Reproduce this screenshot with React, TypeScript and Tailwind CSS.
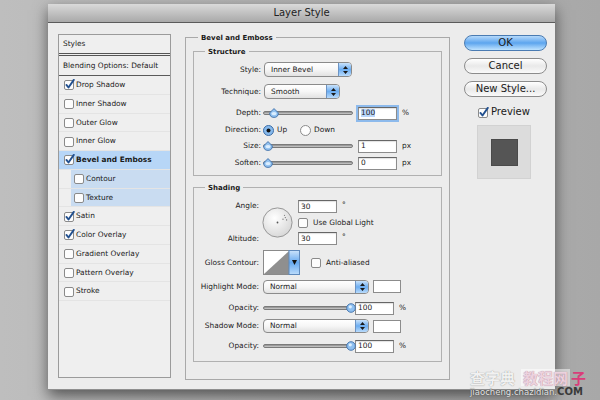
import React from "react";

type StyleRow = { label: string; checked?: boolean; active?: boolean; sub?: boolean };

const styleRows: StyleRow[] = [
  { label: "Drop Shadow", checked: true },
  { label: "Inner Shadow" },
  { label: "Outer Glow" },
  { label: "Inner Glow" },
  { label: "Bevel and Emboss", checked: true, active: true },
  { label: "Contour", sub: true },
  { label: "Texture", sub: true },
  { label: "Satin", checked: true },
  { label: "Color Overlay", checked: true },
  { label: "Gradient Overlay" },
  { label: "Pattern Overlay" },
  { label: "Stroke" },
];

const CheckBox = ({ checked }: { checked?: boolean }) => (
  <svg width="11" height="11" viewBox="0 0 11 11" className="shrink-0 overflow-visible">
    <rect x="0.5" y="1.5" width="9" height="9" rx="1.5" fill="#fdfdfd" stroke="#8a8a8a" />
    {checked && (
      <path
        d="M2.4 5.9 L4.5 8.5 L9.8 0.9"
        fill="none"
        stroke="#22508f"
        strokeWidth="1.9"
        strokeLinecap="round"
        strokeLinejoin="round"
      />
    )}
  </svg>
);

const Radio = ({ on }: { on?: boolean }) => (
  <svg width="11" height="11" viewBox="0 0 11 11" className="shrink-0">
    <circle cx="5.5" cy="5.5" r="5" fill={on ? "#86b9ec" : "#fdfdfd"} stroke={on ? "#3d6da6" : "#8a8a8a"} />
    {on && <circle cx="5.5" cy="5.5" r="2" fill="#111" />}
  </svg>
);

const Select = ({ value, className }: { value: string; className: string }) => (
  <div
    className={`flex rounded-[4px] border border-[#8b8b8b] bg-gradient-to-b from-white via-[#f6f6f6] to-[#e2e2e2] overflow-hidden ${className}`}
  >
    <span className="flex-1 pl-[6px] flex items-center">{value}</span>
    <span className="w-[13px] flex items-center justify-center border-l border-[#6c93c3] bg-gradient-to-b from-[#c9e2fa] via-[#6badf1] to-[#b9dbfb]">
      <svg width="5" height="8" viewBox="0 0 5 8">
        <path d="M2.5 0 L5 3 H0 Z M0 5 H5 L2.5 8 Z" fill="#1a1a1a" />
      </svg>
    </span>
  </div>
);

const Field = ({ value, focus }: { value: string; focus?: boolean }) => (
  <div
    className={`w-[39px] h-[13px] bg-white border border-[#8c8c8c] border-t-[#666] pl-[2px] flex items-center shadow-[inset_0_1px_1px_rgba(0,0,0,0.12)] ${
      focus ? "ring-2 ring-[#8dbaec]" : ""
    }`}
  >
    {focus ? <span className="bg-[#bad7fb]">{value}</span> : value}
  </div>
);

const Slider = ({ pos, round }: { pos: number; round?: boolean }) => (
  <div className="relative w-[90px] h-[12px] flex items-center shrink-0">
    <div className="w-full h-[4px] rounded-full border border-[#7a7a7a] bg-gradient-to-b from-[#8a8a8a] to-[#cfcfcf]" />
    {round ? (
      <svg className="absolute top-[1px]" style={{ left: pos }} width="10" height="10" viewBox="0 0 10 10">
        <circle cx="5" cy="5" r="4.3" fill="#8fc0f0" stroke="#3f71aa" strokeWidth="0.9" />
        <circle cx="4.3" cy="3.8" r="1.6" fill="#dcefff" />
      </svg>
    ) : (
      <svg className="absolute top-[1px]" style={{ left: pos }} width="10" height="10" viewBox="0 0 10 10">
        <path d="M5 0.6 L9.3 4.8 Q9.4 9.4 5 9.4 Q0.6 9.4 0.7 4.8 Z" fill="#92c2f0" stroke="#3f71aa" strokeWidth="0.9" />
        <ellipse cx="5" cy="5.6" rx="2.6" ry="1.6" fill="#dbeeff" />
      </svg>
    )}
  </div>
);

const Legend = ({ text, className }: { text: string; className: string }) => (
  <div className={`-mt-[5px] h-[10px] w-fit px-[3px] bg-[#ececec] font-bold text-[7px] leading-[10px] ${className}`}>
    {text}
  </div>
);

const Button = ({ label, primary }: { label: string; primary?: boolean }) => (
  <div
    className={`h-[16px] rounded-full border text-[10px] leading-[14px] text-center ${
      primary
        ? "border-[#4a7bb2] bg-gradient-to-b from-[#b5d9fa] via-[#5ca5ee] to-[#bfe3fe]"
        : "border-[#8c8c8c] bg-gradient-to-b from-white via-[#e9e9e9] to-[#fafafa]"
    }`}
  >
    {label}
  </div>
);

const AngleDial = () => (
  <svg width="31" height="31" viewBox="0 0 31 31" className="shrink-0">
    <defs>
      <radialGradient id="dial" cx="0.4" cy="0.35" r="0.7">
        <stop offset="0" stopColor="#ffffff" />
        <stop offset="1" stopColor="#d6d6d6" />
      </radialGradient>
    </defs>
    <circle cx="15.5" cy="15.5" r="14.6" fill="url(#dial)" stroke="#979797" />
    <circle cx="15.5" cy="15.5" r="0.9" fill="#555" />
    <circle cx="21" cy="12.2" r="0.6" fill="#666" />
    <circle cx="23.3" cy="10.6" r="0.6" fill="#666" />
    <circle cx="24.6" cy="12.9" r="0.6" fill="#666" />
    <circle cx="22.5" cy="8.4" r="0.6" fill="#888" />
  </svg>
);

const ContourPreview = () => (
  <svg width="37" height="25" viewBox="0 0 37 25" className="shrink-0">
    <defs>
      <linearGradient id="cblue" x1="0" y1="0" x2="0" y2="1">
        <stop offset="0" stopColor="#cbe3fb" />
        <stop offset="0.5" stopColor="#66a9f0" />
        <stop offset="1" stopColor="#bcdcfb" />
      </linearGradient>
    </defs>
    <rect x="0.5" y="0.5" width="36" height="24" fill="#fff" stroke="#8a8a8a" />
    <path d="M1 24 L26 1 V24 Z" fill="#8f8f8f" />
    <rect x="26" y="0.5" width="10.5" height="24" fill="url(#cblue)" stroke="#5f89bb" />
    <path d="M29 10 H34 L31.5 15 Z" fill="#111" />
  </svg>
);

const LeftPanel = () => (
  <div className="w-[113px] h-[344px] border border-[#9b9b9b] bg-[#efefef] shrink-0">
    <div className="h-[21px] border-b-[3px] border-double border-[#555] pl-[4px] flex items-center">Styles</div>
    <div className="h-[20px] border-b border-[#5a5a5a] pl-[4px] flex items-center">Blending Options: Default</div>
    {styleRows.map((s) => (
      <div
        key={s.label}
        className={`h-[18.75px] flex border-b border-[#e4e4e4] ${s.active ? "bg-[#b7d6f7] font-bold" : ""}`}
      >
        <div
          className={`flex items-center gap-[1px] h-full ${
            s.sub ? "ml-[12px] pl-[3px] flex-1 bg-[#c9dcf1]" : "pl-[5px]"
          }`}
        >
          <CheckBox checked={s.checked} />
          <span>{s.label}</span>
        </div>
      </div>
    ))}
  </div>
);

const Structure = () => (
  <div className="mt-[8px] h-[125px] border border-[#b1b1b1] flex flex-col">
    <Legend text="Structure" className="ml-[11px]" />
    <div className="mt-[5px] h-[15px] flex items-center">
      <span className="w-[67px] text-right">Style:</span>
      <Select value="Inner Bevel" className="ml-[3px] w-[88px] h-[15px]" />
    </div>
    <div className="mt-[7px] h-[15px] flex items-center">
      <span className="w-[67px] text-right">Technique:</span>
      <Select value="Smooth" className="ml-[3px] w-[76px] h-[15px]" />
    </div>
    <div className="mt-[7px] h-[14px] flex items-center">
      <span className="w-[67px] text-right">Depth:</span>
      <div className="ml-[2px]">
        <Slider pos={6} />
      </div>
      <div className="ml-[5px]">
        <Field value="100" focus />
      </div>
      <span className="ml-[5px]">%</span>
    </div>
    <div className="mt-[4px] h-[12px] flex items-center">
      <span className="w-[67px] text-right">Direction:</span>
      <span className="ml-[2px]">
        <Radio on />
      </span>
      <span className="ml-[3px]">Up</span>
      <span className="ml-[13px]">
        <Radio />
      </span>
      <span className="ml-[3px]">Down</span>
    </div>
    <div className="mt-[4px] h-[12px] flex items-center">
      <span className="w-[67px] text-right">Size:</span>
      <div className="ml-[2px]">
        <Slider pos={0} />
      </div>
      <div className="ml-[5px]">
        <Field value="1" />
      </div>
      <span className="ml-[5px]">px</span>
    </div>
    <div className="mt-[5px] h-[12px] flex items-center">
      <span className="w-[67px] text-right">Soften:</span>
      <div className="ml-[2px]">
        <Slider pos={0} />
      </div>
      <div className="ml-[5px]">
        <Field value="0" />
      </div>
      <span className="ml-[5px]">px</span>
    </div>
  </div>
);

const Shading = () => (
  <div className="mt-[11px] h-[175px] border border-[#b1b1b1] flex flex-col">
    <Legend text="Shading" className="ml-[11px]" />
    <div className="mt-[7px] h-[45px] flex items-center">
      <div className="w-[65px] h-full flex flex-col justify-between text-right">
        <span className="h-[12px] leading-[12px]">Angle:</span>
        <span className="h-[12px] leading-[12px]">Altitude:</span>
      </div>
      <div className="ml-[3px]">
        <AngleDial />
      </div>
      <div className="ml-[5px] h-full flex flex-col justify-between">
        <div className="flex items-start">
          <Field value="30" />
          <span className="ml-[5px] mt-[1px]">°</span>
        </div>
        <div className="flex items-center gap-[4px]">
          <CheckBox />
          <span>Use Global Light</span>
        </div>
        <div className="flex items-start">
          <Field value="30" />
          <span className="ml-[5px] mt-[1px]">°</span>
        </div>
      </div>
    </div>
    <div className="mt-[5px] h-[25px] flex items-center">
      <span className="w-[65px] text-right">Gloss Contour:</span>
      <div className="ml-[4px]">
        <ContourPreview />
      </div>
      <span className="ml-[11px]">
        <CheckBox />
      </span>
      <span className="ml-[4px]">Anti-aliased</span>
    </div>
    <div className="mt-[5px] h-[13px] flex items-center">
      <span className="w-[65px] text-right">Highlight Mode:</span>
      <Select value="Normal" className="ml-[4px] w-[106px] h-[14px]" />
      <div className="ml-[4px] w-[28px] h-[13px] bg-white border border-[#8c8c8c]" />
    </div>
    <div className="mt-[9px] h-[12px] flex items-center">
      <span className="w-[65px] text-right">Opacity:</span>
      <div className="ml-[4px]">
        <Slider pos={83} round />
      </div>
      <div className="ml-[2px]">
        <Field value="100" />
      </div>
      <span className="ml-[5px]">%</span>
    </div>
    <div className="mt-[5px] h-[14px] flex items-center">
      <span className="w-[65px] text-right">Shadow Mode:</span>
      <Select value="Normal" className="ml-[4px] w-[106px] h-[14px]" />
      <div className="ml-[4px] w-[28px] h-[13px] bg-white border border-[#8c8c8c]" />
    </div>
    <div className="mt-[7px] h-[12px] flex items-center">
      <span className="w-[65px] text-right">Opacity:</span>
      <div className="ml-[4px]">
        <Slider pos={83} round />
      </div>
      <div className="ml-[2px]">
        <Field value="100" />
      </div>
      <span className="ml-[5px]">%</span>
    </div>
  </div>
);

const RightColumn = () => (
  <div className="ml-[14px] mt-[1px] w-[83px] flex flex-col shrink-0">
    <Button label="OK" primary />
    <div className="mt-[7px]">
      <Button label="Cancel" />
    </div>
    <div className="mt-[7px]">
      <Button label="New Style..." />
    </div>
    <div className="mt-[9px] pl-[14px] h-[12px] flex items-center gap-[2px] text-[10px]">
      <CheckBox checked />
      <span>Preview</span>
    </div>
    <div className="mt-[7px] ml-[13px] w-[54px] h-[54px] bg-[#dcdcdc] border border-[#d2d2d2] flex items-center justify-center">
      <div className="w-[27px] h-[27px] bg-[#555] border border-[#4a4a4a]" />
    </div>
  </div>
);

// faint site watermark sitting over the bottom-right corner
const Watermark = () => (
  <div className="absolute left-[470px] top-[369px] flex flex-col pointer-events-none">
    <div className="flex items-end text-[15px] leading-[17px] font-bold font-['Noto_Sans_CJK_SC',sans-serif]">
      <span className="text-[#f2f2f2] opacity-90 [text-shadow:0_0_1px_#777]">查字典</span>
      <span className="ml-[6px] px-[2px] bg-white/50 text-[#ecd2de] [text-shadow:0_0_1px_#a8708a]">教程网</span>
      <span className="ml-[1px] text-[#d93d7a]">子</span>
    </div>
    <div className="mt-[1px] text-[8.5px] leading-[10px] text-[#e6e6e6] whitespace-nowrap [text-shadow:0_0_1px_#333]">
      jiaocheng.chazidian.<span className="text-[10px] font-bold text-[#3a3a3a] [text-shadow:none]">COM</span>
    </div>
  </div>
);

export default function App() {
  return (
    <div className="relative w-[600px] h-[400px] overflow-hidden bg-gradient-to-r from-[#bebebe] via-[#b3b3b3] to-[#a8a8a8] font-['DejaVu_Sans',sans-serif] text-[#1a1a1a] text-[7.4px] leading-none">
      <div className="pt-[4px] pl-[48px]">
        <div className="w-[507px] h-[386px] bg-[#ececec] border-b border-[#8f8f8f] shadow-[0_6px_14px_rgba(0,0,0,0.55)] flex flex-col">
          <div className="h-[19px] shrink-0 border-b border-[#5b5b5b] bg-gradient-to-b from-[#dadada] to-[#a9a9a9] flex items-center justify-center text-[10px] text-[#222]">
            Layer Style
          </div>
          <div className="flex pl-[10px] pt-[11px]">
            <LeftPanel />
            <div className="ml-[14px] mt-[3px] w-[265px] h-[343px] border border-[#a9a9a9] px-[7px] flex flex-col shrink-0">
              <Legend text="Bevel and Emboss" className="ml-[5px]" />
              <Structure />
              <Shading />
            </div>
            <RightColumn />
          </div>
        </div>
      </div>
      <Watermark />
    </div>
  );
}
